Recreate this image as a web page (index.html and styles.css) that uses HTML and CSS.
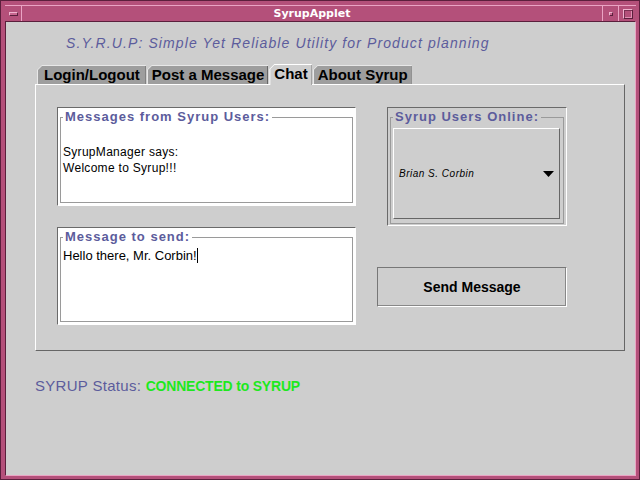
FILE: index.html
```html
<!DOCTYPE html>
<html>
<head>
<meta charset="utf-8">
<link rel="stylesheet" href="styles.css">
</head>
<body>
<div class="window">
  <div class="titlebar">
    <div class="tb-btn tb-menu"><span class="bar"></span></div>
    <div class="tb-title">SyrupApplet</div>
    <div class="tb-btn tb-min"><span class="dot"></span></div>
    <div class="tb-btn tb-max"><span class="sq"></span></div>
  </div>
  <div class="client">
    <div class="heading">S.Y.R.U.P: Simple Yet Reliable Utility for Product planning</div>
    <div class="tabs">
      <div class="tab"><span class="tab-in">Login/Logout</span></div>
      <div class="tab"><span class="tab-in">Post a Message</span></div>
      <div class="tab active"><span class="tab-in">Chat</span></div>
      <div class="tab"><span class="tab-in">About Syrup</span></div>
    </div>
    <div class="panel">
      <div class="col-left">
        <div class="field msgs">
          <fieldset class="group">
            <legend>Messages from Syrup Users:</legend>
            <div class="msg-text">SyrupManager says:<br>Welcome to Syrup!!!</div>
          </fieldset>
        </div>
        <div class="field send">
          <fieldset class="group">
            <legend>Message to send:</legend>
            <div class="send-text">Hello there, Mr. Corbin!<span class="caret"></span></div>
          </fieldset>
        </div>
      </div>
      <div class="col-right">
        <div class="users">
          <fieldset class="group users-group">
            <legend>Syrup Users Online:</legend>
            <div class="combo">
              <span class="combo-text">Brian S. Corbin</span>
              <svg class="arrow" width="11" height="6" viewBox="0 0 11 6"><polygon points="0,0 11,0 5.5,6" fill="#000"/></svg>
            </div>
          </fieldset>
        </div>
        <div class="btn">Send Message</div>
      </div>
    </div>
    <div class="status">SYRUP Status: <span class="connected">CONNECTED to SYRUP</span></div>
  </div>
</div>
</body>
</html>
```

FILE: styles.css
```css
html, body {
  margin: 0;
  padding: 0;
  background: #b4507a;
}
.window {
  width: 640px;
  height: 480px;
  box-sizing: border-box;
  background: #b4507a;
  border: 1px solid #5a1f3c;
  padding: 4px 3px 3px 4px;
  display: flex;
  flex-direction: column;
}
.titlebar {
  height: 16px;
  display: flex;
  border-top: 1px solid #eaa4c4;
  box-sizing: border-box;
  background: #b4507a;
}
.tb-btn {
  display: flex;
  align-items: center;
  justify-content: center;
}
.tb-menu {
  width: 16px;
  border-right: 1px solid #eaa4c4;
}
.tb-menu .bar {
  width: 7px;
  height: 2px;
  border: 1px solid;
  border-color: #f0b4cf #5a1f3c #5a1f3c #f0b4cf;
  background: #c8668f;
}
.tb-title {
  flex: 1;
  text-align: center;
  color: #fff;
  font-family: "DejaVu Sans", sans-serif;
  font-weight: bold;
  font-size: 11px;
  line-height: 15px;
  border-right: 1px solid #eaa4c4;
}
.tb-min {
  width: 15px;
  border-right: 1px solid #eaa4c4;
}
.tb-min .dot {
  width: 2px;
  height: 2px;
  border: 1px solid;
  border-color: #f0b4cf #5a1f3c #5a1f3c #f0b4cf;
  background: #c8668f;
}
.tb-max {
  width: 17px;
}
.tb-max .sq {
  width: 8px;
  height: 8px;
  border: 1px solid;
  border-color: #f0b4cf #5a1f3c #5a1f3c #f0b4cf;
  box-shadow: inset 1px 1px 0 #7a2f52, inset -1px -1px 0 #e090b3;
}
.client {
  flex: 1;
  background: #cecece;
  border: 1px solid;
  border-color: #5a1f3c #eaa4c4 #eaa4c4 #5a1f3c;
  display: flex;
  flex-direction: column;
  font-family: "Liberation Sans", Arial, sans-serif;
}
.heading {
  margin-top: 12px;
  padding-left: 60px;
  height: 18px;
  line-height: 18px;
  font-size: 14px;
  font-style: italic;
  letter-spacing: 1.1px;
  color: #5c5c9c;
}
.tabs {
  margin-top: 12px;
  margin-left: 31px;
  height: 20px;
  display: flex;
  align-items: flex-end;
  position: relative;
  z-index: 1;
}
.tab {
  height: 19px;
  box-sizing: border-box;
  background: #e8e8e8;
  padding: 1px 0 0 1px;
  clip-path: polygon(0 5px, 5px 0, 100% 0, 100% 100%, 0 100%);
  margin-right: 1px;
  display: flex;
}
.tab-in {
  display: block;
  background: #9e9e9e;
  border-right: 1px solid #666;
  clip-path: polygon(0 4px, 4px 0, 100% 0, 100% 100%, 0 100%);
  padding: 0 3px 0 4px;
  font-size: 15px;
  font-weight: bold;
  line-height: 18px;
  color: #000;
  white-space: nowrap;
}
.tab:first-child .tab-in {
  padding: 0 5px 0 6px;
}
.tab.active {
  height: 21px;
  margin-bottom: -1px;
  background: #fff;
}
.tab.active .tab-in {
  background: #cecece;
}
.panel {
  margin-left: 29px;
  width: 590px;
  height: 267px;
  box-sizing: border-box;
  border: 1px solid;
  border-color: #fff #666 #666 #fff;
  padding: 22px 0 0 21px;
  display: flex;
}
.col-left {
  width: 299px;
  display: flex;
  flex-direction: column;
  gap: 21px;
}
.col-right {
  margin-left: 21px;
  width: 190px;
  display: flex;
  flex-direction: column;
}
.field {
  box-sizing: border-box;
  width: 299px;
  border: 1px solid;
  border-color: #6a6a6a #fff #fff #6a6a6a;
  background: #fff;
  padding: 0 2px 2px 2px;
  display: flex;
  flex-direction: column;
}
.msgs { height: 99px; }
.send { height: 98px; }
.group {
  flex: 1;
  margin: 0;
  min-width: 0;
  border: 1px solid #9a9a9a;
  padding: 0 2px 2px 2px;
}
.group legend {
  padding: 0 2px;
  height: 18px;
  line-height: 18px;
  font-size: 13px;
  font-weight: bold;
  letter-spacing: 1px;
  color: #5c5c9c;
}
.msg-text {
  padding-top: 18px;
  font-size: 12px;
  line-height: 16px;
  letter-spacing: 0.3px;
  color: #000;
}
.send-text {
  padding-top: 2px;
  font-size: 13px;
  line-height: 16px;
  color: #000;
}
.caret {
  display: inline-block;
  width: 1px;
  height: 15px;
  background: #000;
  vertical-align: -3px;
}
.users {
  margin-left: 10px;
  width: 180px;
  height: 119px;
  box-sizing: border-box;
  border: 1px solid;
  border-color: #6a6a6a #fff #fff #6a6a6a;
  padding: 0 2px 1px 2px;
  display: flex;
  flex-direction: column;
}
.users-group {
  padding: 2px 3px 3px 2px;
}
.combo {
  height: 91px;
  box-sizing: border-box;
  border: 1px solid;
  border-color: #fff #666 #666 #fff;
  padding: 0 5px;
  display: flex;
  align-items: center;
  justify-content: space-between;
}
.combo-text {
  font-size: 10px;
  font-style: italic;
  letter-spacing: 0.5px;
  color: #000;
}
.arrow {
  display: block;
}
.btn {
  margin-top: 41px;
  width: 190px;
  height: 40px;
  box-sizing: border-box;
  border: 1px solid;
  border-color: #777 #fff #fff #777;
  box-shadow: inset -1px -1px 0 #888;
  display: flex;
  align-items: center;
  justify-content: center;
  font-size: 14px;
  font-weight: bold;
  color: #000;
}
.status {
  margin-top: 26px;
  padding-left: 29px;
  height: 18px;
  line-height: 18px;
  font-size: 15px;
  letter-spacing: 0.3px;
  color: #5c5c9c;
}
.connected {
  font-size: 14px;
  font-weight: bold;
  letter-spacing: -0.2px;
  color: #1ee81e;
}
```
